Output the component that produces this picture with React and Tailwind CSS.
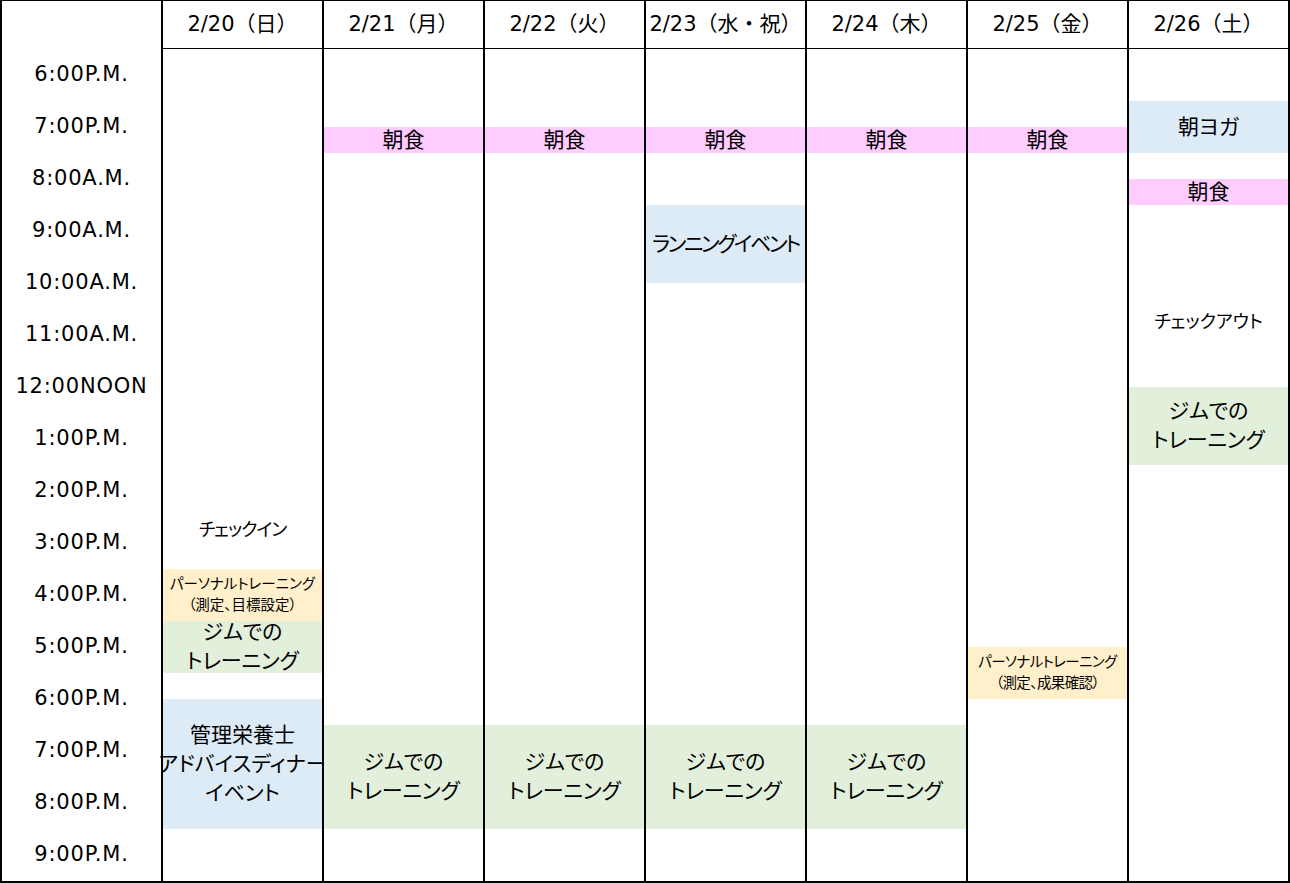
const days = ['2/20（日）', '2/21（月）', '2/22（火）', '2/23（水・祝）', '2/24（木）', '2/25（金）', '2/26（土）']

const times = [
  '6:00P.M.', '7:00P.M.', '8:00A.M.', '9:00A.M.', '10:00A.M.', '11:00A.M.', '12:00NOON', '1:00P.M.',
  '2:00P.M.', '3:00P.M.', '4:00P.M.', '5:00P.M.', '6:00P.M.', '7:00P.M.', '8:00P.M.', '9:00P.M.',
]

const colors = {
  pink: 'bg-[#ffccff]',
  blue: 'bg-[#ddebf7]',
  green: 'bg-[#e2efda]',
  yellow: 'bg-[#fff0cb]',
  none: '',
}

const rowStart = {
  2: 'row-start-3', 3: 'row-start-4', 5: 'row-start-6', 6: 'row-start-7', 9: 'row-start-10', 13: 'row-start-14',
  17: 'row-start-18', 20: 'row-start-21', 22: 'row-start-23', 23: 'row-start-24', 25: 'row-start-26', 26: 'row-start-27',
}
const rowSpan = { 1: 'row-span-1', 2: 'row-span-2', 3: 'row-span-3', 4: 'row-span-4', 5: 'row-span-5' }

const gym = ['ジムでの', 'トレーニング']
const breakfast = { s: 3, n: 1, c: 'pink', lines: ['朝食'] }

const events = [
  [
    { s: 17, n: 3, c: 'none', lines: ['チェックイン'], small: true, track: 'tracking-[-1px]' },
    { s: 20, n: 2, c: 'yellow', lines: ['パーソナルトレーニング', '（測定、目標設定）'], tiny: true },
    { s: 22, n: 2, c: 'green', lines: gym },
    { s: 25, n: 5, c: 'blue', lines: ['管理栄養士', 'アドバイスディナー', 'イベント'] },
  ],
  [breakfast, { s: 26, n: 4, c: 'green', lines: gym }],
  [breakfast, { s: 26, n: 4, c: 'green', lines: gym }],
  [
    breakfast,
    { s: 6, n: 3, c: 'blue', lines: ['ランニングイベント'], track: 'tracking-[-2.4px]' },
    { s: 26, n: 4, c: 'green', lines: gym },
  ],
  [breakfast, { s: 26, n: 4, c: 'green', lines: gym }],
  [breakfast, { s: 23, n: 2, c: 'yellow', lines: ['パーソナルトレーニング', '（測定、成果確認）'], tiny: true, track: 'tracking-[-0.6px]' }],
  [
    { s: 2, n: 2, c: 'blue', lines: ['朝ヨガ'] },
    { s: 5, n: 1, c: 'pink', lines: ['朝食'] },
    { s: 9, n: 3, c: 'none', lines: ['チェックアウト'], small: true },
    { s: 13, n: 3, c: 'green', lines: gym },
  ],
]

function Event({ ev }) {
  const size = ev.tiny
    ? 'text-[14.5px] leading-[21px]'
    : ev.small
      ? 'text-[18px] leading-[28px]'
      : 'text-[21px] leading-[29px]'
  return (
    <div
      className={`${rowStart[ev.s]} ${rowSpan[ev.n]} ${colors[ev.c]} ${size} ${ev.track || ''} col-start-1 flex flex-col items-center justify-center whitespace-nowrap text-center [font-feature-settings:'palt']`}
    >
      {ev.lines.map((l) => (
        <div key={l}>{l}</div>
      ))}
    </div>
  )
}

export default function App() {
  return (
    <div
      className="flex w-[1290px] h-[883px] bg-white text-black border-t border-b-2 border-r-2 border-black"
      style={{ fontFamily: '"DejaVu Sans", "Noto Sans CJK JP", sans-serif' }}
    >
      {/* time labels */}
      <div className="flex flex-col w-[161px] shrink-0 border-l-2 border-black">
        <div className="h-[48px] shrink-0" />
        {times.map((t, i) => (
          <div key={i} className="h-[52px] shrink-0 flex items-center justify-center text-[21px] tracking-[0.8px]">
            {t}
          </div>
        ))}
      </div>

      {days.map((d, i) => (
        <div key={d} className="flex flex-col w-[161px] shrink-0 border-l-2 border-black">
          <div className="h-[48px] shrink-0 border-b border-black flex items-center justify-center text-[21px] whitespace-nowrap">
            {d}
          </div>
          <div className="grid grid-cols-1 grid-rows-[repeat(32,26px)] h-[832px]">
            {events[i].map((ev, j) => (
              <Event key={j} ev={ev} />
            ))}
          </div>
        </div>
      ))}
    </div>
  )
}
